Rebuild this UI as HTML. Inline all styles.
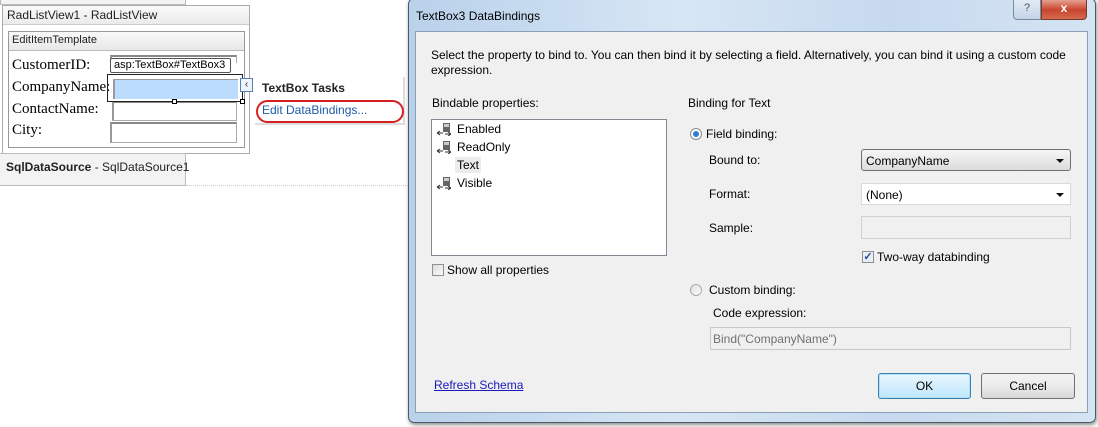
<!DOCTYPE html>
<html><head><meta charset="utf-8"><style>
*{box-sizing:border-box;margin:0;padding:0}
body{width:1098px;height:427px;background:#fff;position:relative;overflow:hidden;font-family:"Liberation Sans",sans-serif;font-size:12px;color:#000}
.a{position:absolute;white-space:nowrap}
.serif{font-family:"Liberation Serif",serif;font-size:15px}
.tb{position:absolute;border:1px solid #aaa;border-top:2px solid #888;border-left:2px solid #999;background:#fff}
.combo{position:absolute;border:1px solid #9a9a9a;border-radius:3px;padding:4px 4px;font-size:12px}
.arr{position:absolute;right:6px;top:9px;width:0;height:0;border-left:4px solid transparent;border-right:4px solid transparent;border-top:4px solid #111}
.ic{position:absolute;width:14px;height:13px}
.btn{position:absolute;border:1px solid #707070;border-radius:3px;text-align:center;line-height:24px;font-size:12px}
</style></head><body>
<div class="a" style="left:0;top:0;width:186px;height:5px;border:1px solid #bbb;border-top:none;background:#f3f3f3"></div>
<div class="a" style="left:2px;top:5px;width:248px;height:149px;border:1px solid #aaa;background:#fff">
  <div style="height:19px;background:linear-gradient(#fafafa,#ebebeb);border-bottom:1px solid #ccc;padding:2px 4px;font-size:12px;color:#222">RadListView1 - RadListView</div>
</div>
<div class="a" style="left:8px;top:31px;width:237px;height:117px;border:1px solid #999;background:#fff">
  <div style="height:19px;background:linear-gradient(#f8f8f8,#e8e8e8);border-bottom:1px solid #bbb;padding:2px 3px;font-size:11px;color:#222">EditItemTemplate</div>
</div>
<div class="a serif" style="left:12px;top:57px">CustomerID:</div>
<div class="a serif" style="left:12px;top:79px">CompanyName:</div>
<div class="a serif" style="left:12px;top:101px">ContactName:</div>
<div class="a serif" style="left:12px;top:122px">City:</div>
<div class="tb" style="left:110px;top:55px;width:127px;height:8px;border-bottom:none"></div>
<div class="tb" style="left:112px;top:101px;width:125px;height:20px"></div>
<div class="tb" style="left:110px;top:122px;width:127px;height:21px"></div>
<div class="a" style="left:110px;top:58px;width:121px;height:15px;border:1px solid #555;border-radius:2px;background:#fff;font-size:11px;padding:0 3px;line-height:13px">asp:TextBox#TextBox3</div>
<div class="a" style="left:107px;top:74px;width:136px;height:28px;border:1px solid #222"></div>
<div class="a" style="left:113px;top:79px;width:125px;height:20px;background:#bcdcfd;border-left:2px solid #999;border-top:1px solid #999"></div>
<div class="a" style="left:172px;top:99px;width:5px;height:5px;border:1px solid #000;background:#fff"></div>
<div class="a" style="left:240px;top:99px;width:5px;height:5px;border:1px solid #000;background:#fff"></div>
<div class="a" style="left:240px;top:78px;width:13px;height:14px;border:1px solid #5b7fb0;background:#eef4fb;font-size:10px;line-height:11px;text-align:center;color:#223">&lsaquo;</div>
<div class="a" style="left:255px;top:77px;width:150px;height:48px;background:#fff;border-right:2px solid #ddd;border-bottom:2px solid #ddd"></div>
<div class="a" style="left:262px;top:81px;font-weight:bold;font-size:12px;color:#222">TextBox Tasks</div>
<div class="a" style="left:262px;top:103px;font-size:12px;color:#1e5aa8">Edit DataBindings...</div>
<div class="a" style="left:256px;top:100px;width:148px;height:23px;border:2px solid #d42020;border-radius:12px"></div>
<div class="a" style="left:0;top:153px;width:186px;height:33px;background:#f3f3f3;border:1px solid #bbb;border-left:none"></div>
<div class="a" style="left:6px;top:160px;font-size:12px;color:#222"><b>SqlDataSource</b> - SqlDataSource1</div>
<div class="a" style="left:186px;top:185px;width:222px;height:0;border-top:1px dotted #ccc"></div>
<div class="a" style="left:408px;top:-2px;width:688px;height:425px;border:1px solid #4a5a6a;border-radius:6px;background:linear-gradient(90deg,#b9d1ea,#d7e6f5 40%,#c6d9ee 70%,#d5e4f3);box-shadow:1px 2px 4px rgba(0,0,0,.45)"></div>
<div class="a" style="left:416px;top:9px;font-size:12px;color:#000">TextBox3 DataBindings</div>
<div class="a" style="left:1013px;top:-1px;width:28px;height:21px;border:1px solid #7a8aa0;border-top:none;border-radius:0 0 0 4px;background:linear-gradient(#e2ecf7,#c4d4e8);text-align:center;color:#555;font-size:11px;line-height:19px">?</div>
<div class="a" style="left:1041px;top:-1px;width:46px;height:21px;border:1px solid #7a3a30;border-top:none;border-radius:0 0 4px 0;background:linear-gradient(#e9a99a,#c8452e 55%,#d56a4e);text-align:center;color:#fff;font-weight:bold;font-size:12px;line-height:19px">x</div>
<div class="a" style="left:415px;top:31px;width:673px;height:382px;background:#f0f0f0;border:1px solid #8aa0b8"></div>
<div class="a" style="left:431px;top:48px">Select the property to bind to. You can then bind it by selecting a field. Alternatively, you can bind it using a custom code</div>
<div class="a" style="left:431px;top:63px">expression.</div>
<div class="a" style="left:432px;top:96px">Bindable properties:</div>
<div class="a" style="left:431px;top:119px;width:236px;height:137px;background:#fff;border:1px solid #828790"></div>
<svg class="ic" style="left:437px;top:123px" viewBox="0 0 14 13"><rect x="6" y="0" width="7" height="9" fill="#666"/><rect x="7" y="1" width="5" height="3" fill="#ccc"/><path d="M0 10h6M3 8l-3 2 3 2M8 11h6M11 9l3 2-3 2" stroke="#333" fill="none"/></svg>
<div class="a" style="left:457px;top:122px">Enabled</div>
<svg class="ic" style="left:437px;top:141px" viewBox="0 0 14 13"><rect x="6" y="0" width="7" height="9" fill="#666"/><rect x="7" y="1" width="5" height="3" fill="#ccc"/><path d="M0 10h6M3 8l-3 2 3 2M8 11h6M11 9l3 2-3 2" stroke="#333" fill="none"/></svg>
<div class="a" style="left:457px;top:140px">ReadOnly</div>
<div class="a" style="left:455px;top:157px;width:26px;height:16px;background:#ececec"></div>
<div class="a" style="left:457px;top:158px">Text</div>
<svg class="ic" style="left:437px;top:177px" viewBox="0 0 14 13"><rect x="6" y="0" width="7" height="9" fill="#666"/><rect x="7" y="1" width="5" height="3" fill="#ccc"/><path d="M0 10h6M3 8l-3 2 3 2M8 11h6M11 9l3 2-3 2" stroke="#333" fill="none"/></svg>
<div class="a" style="left:457px;top:176px">Visible</div>
<div class="a" style="left:432px;top:264px;width:12px;height:12px;border:1px solid #8e8f8f;background:linear-gradient(135deg,#dcdcdc,#fafafa)"></div>
<div class="a" style="left:447px;top:263px">Show all properties</div>
<div class="a" style="left:688px;top:96px">Binding for Text</div>
<div class="a" style="left:690px;top:128px;width:12px;height:12px;border-radius:50%;border:1px solid #8a8a8a;background:#fff"><div style="margin:2px;width:6px;height:6px;border-radius:50%;background:#2b7ed6"></div></div>
<div class="a" style="left:706px;top:127px">Field binding:</div>
<div class="a" style="left:709px;top:153px">Bound to:</div>
<div class="combo" style="left:861px;top:149px;width:210px;height:22px;background:linear-gradient(#f6f6f6,#dcdcdc);border-color:#707070">CompanyName<div class="arr"></div></div>
<div class="a" style="left:709px;top:187px">Format:</div>
<div class="combo" style="left:861px;top:183px;width:210px;height:22px;background:#fff;border-color:#dadada;border-radius:0">(None)<div class="arr"></div></div>
<div class="a" style="left:709px;top:221px">Sample:</div>
<div class="a" style="left:861px;top:216px;width:210px;height:23px;border:1px solid #d0d0d0;background:#f0f0f0"></div>
<div class="a" style="left:862px;top:251px;width:12px;height:12px;border:1px solid #8e8f8f;background:#e8eef8;color:#2a4d9a;font-size:11px;line-height:10px;text-align:center;font-weight:bold">✓</div>
<div class="a" style="left:877px;top:250px">Two-way databinding</div>
<div class="a" style="left:690px;top:284px;width:12px;height:12px;border-radius:50%;border:1px solid #aaa;background:linear-gradient(135deg,#ddd,#fff)"></div>
<div class="a" style="left:709px;top:283px">Custom binding:</div>
<div class="a" style="left:713px;top:306px">Code expression:</div>
<div class="a" style="left:710px;top:327px;width:361px;height:23px;border:1px solid #c8c8c8;background:#f0f0f0;padding:4px 2px;color:#707070">Bind("CompanyName")</div>
<div class="a" style="left:434px;top:378px;color:#1a1ab8;text-decoration:underline">Refresh Schema</div>
<div class="btn" style="left:878px;top:373px;width:93px;height:26px;border-color:#3c7fb1;background:linear-gradient(#eaf6fd,#bee6fd);box-shadow:inset 0 0 0 1px #aee0f8">OK</div>
<div class="btn" style="left:981px;top:373px;width:94px;height:26px;background:linear-gradient(#f2f2f2,#ebebeb 50%,#d6d6d6)">Cancel</div>
</body></html>
